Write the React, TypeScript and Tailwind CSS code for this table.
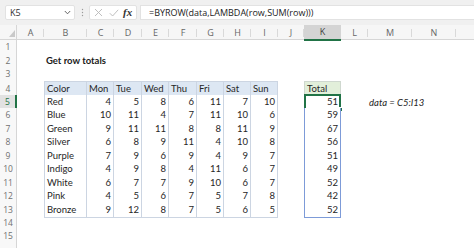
import React from "react";

const GRID =
  "grid grid-cols-[17px_27px_43px_27px_28px_27px_28px_27px_27px_27px_26px_37px_27px_44px_44px_1fr]";

const LETTERS = ["A", "B", "C", "D", "E", "F", "G", "H", "I", "J", "K", "L", "M", "N", ""];

const DAYS = ["Mon", "Tue", "Wed", "Thu", "Fri", "Sat", "Sun"];

const DATA: [string, number[]][] = [
  ["Red", [4, 5, 8, 6, 11, 7, 10]],
  ["Blue", [10, 11, 4, 7, 11, 10, 6]],
  ["Green", [9, 11, 11, 8, 8, 11, 9]],
  ["Silver", [6, 8, 9, 11, 4, 10, 8]],
  ["Purple", [7, 9, 6, 9, 4, 9, 7]],
  ["Indigo", [4, 9, 8, 4, 11, 6, 7]],
  ["White", [6, 7, 7, 9, 10, 6, 7]],
  ["Pink", [4, 5, 6, 7, 5, 7, 8]],
  ["Bronze", [9, 12, 8, 7, 5, 6, 5]],
];

// alternating row heights so borders land on whole pixels
const ROW_H: Record<number, string> = {
  1: "h-[14px]", 2: "h-[13px]", 3: "h-[14px]",
  4: "h-[14px]", 5: "h-[13px]", 6: "h-[14px]", 7: "h-[13px]", 8: "h-[14px]",
  9: "h-[13px]", 10: "h-[14px]", 11: "h-[13px]", 12: "h-[14px]", 13: "h-[13px]",
  14: "h-[14px]", 15: "h-[13px]", 16: "h-[14px]",
};

const ui = { fontFamily: '"Open Sans", "Liberation Sans", sans-serif' };
const cell = { fontFamily: 'Lato, "Open Sans", sans-serif' };

function Toolbar() {
  return (
    <div className="h-[25px] bg-[#f0f0f0] flex items-center pl-[5px] text-[#333]" style={ui}>
      <div className="w-[70px] h-[15px] bg-white border border-[#e2e2e2] rounded-[2px] flex items-center justify-between pl-[4px] pr-[3px] text-[9px]">
        <span>K5</span>
        <svg width="7" height="5" viewBox="0 0 7 5">
          <path d="M0.8 1 L3.5 3.8 L6.2 1" fill="none" stroke="#555" strokeWidth="0.9" />
        </svg>
      </div>
      <div className="w-[14px] flex justify-center">
        <svg width="3" height="9" viewBox="0 0 3 9">
          <circle cx="1.5" cy="1.5" r="0.7" fill="#9a9a9a" />
          <circle cx="1.5" cy="4.5" r="0.7" fill="#9a9a9a" />
          <circle cx="1.5" cy="7.5" r="0.7" fill="#9a9a9a" />
        </svg>
      </div>
      <div className="w-[48px] h-[15px] bg-white border border-[#e2e2e2] rounded-[2px] flex items-center">
        <svg className="ml-[4px]" width="9" height="9" viewBox="0 0 9 9">
          <path d="M1 1 L8 8 M8 1 L1 8" stroke="#b8b8b8" strokeWidth="0.9" />
        </svg>
        <svg className="ml-[6px]" width="10" height="8" viewBox="0 0 10 8">
          <path d="M0.8 4.2 L3.6 7 L9.2 0.8" fill="none" stroke="#b8b8b8" strokeWidth="0.9" />
        </svg>
        <span
          className="ml-[4px] italic font-bold text-[11px] leading-none text-[#333]"
          style={{ fontFamily: '"Liberation Serif", serif' }}
        >
          fx
        </span>
      </div>
      <div className="ml-[3px] flex-1 h-[15px] bg-white border-y border-l border-[#e2e2e2] flex items-center pl-[8px] text-[9px] text-[#222] whitespace-nowrap">
        =BYROW(data,LAMBDA(row,SUM(row)))
      </div>
    </div>
  );
}

function ColumnHeader() {
  return (
    <div className={`${GRID} h-[15px] bg-[#f6f6f6] border-b border-[#d6d6d6]`} style={ui}>
      <div className="relative border-r border-[#d6d6d6]">
        <svg className="absolute left-[9px] top-[5px]" width="6" height="7" viewBox="0 0 6 7">
          <path d="M6 0 L6 7 L0 7 Z" fill="#c9c9c9" />
        </svg>
      </div>
      {LETTERS.map((l, i) =>
        l === "K" ? (
          <div
            key={i}
            className="flex items-center justify-center text-[9px] text-[#3f3f3f] bg-[#d4d4d4] border-b-2 border-[#217346] relative"
          >
            {l}
          </div>
        ) : (
          <div key={i} className="relative flex items-center justify-center text-[9px] text-[#666]">
            {l}
            {l && <span className="absolute right-0 top-[4px] h-[8px] w-px bg-[#d9d9d9]" />}
          </div>
        )
      )}
    </div>
  );
}

function Cell({ r, c }: { r: number; c: number }) {
  // table B4:I13
  if (r >= 4 && r <= 13 && c >= 2 && c <= 9) {
    const head = r === 4;
    const rec = DATA[r - 5];
    const text = head ? (c === 2 ? "Color" : DAYS[c - 3]) : c === 2 ? rec[0] : String(rec[1][c - 3]);
    const left = head || c === 2;
    return (
      <div
        className={`border-r border-b border-[#ccd5e2] flex items-center text-[9.5px] text-[#262626] ${
          head ? "bg-[#dde7f3] border-t" : "bg-white"
        } ${c === 2 ? "border-l" : ""} ${left ? "pl-[2px]" : "justify-end pr-[2px]"}`}
        style={cell}
      >
        {text}
      </div>
    );
  }
  // Total column K4:K13
  if (c === 11 && r >= 4 && r <= 13) {
    if (r === 4) {
      return (
        <div
          className="bg-[#e2efda] border border-[#cfd8cf] flex items-center pl-[2px] text-[9.5px] text-[#262626]"
          style={cell}
        >
          Total
        </div>
      );
    }
    const total = DATA[r - 5][1].reduce((a, b) => a + b, 0);
    return (
      <div
        className={`relative bg-white border-x border-[#7d9bd8] border-b flex items-center justify-end pr-[2px] text-[9.5px] text-[#262626] ${
          r === 13 ? "border-b-[#7d9bd8]" : "border-b-[#d5dbe6]"
        }`}
        style={cell}
      >
        {total}
        {r === 5 && (
          <>
            <span className="absolute -left-[1px] -right-[1px] -top-[1px] -bottom-[1px] border-2 border-[#217346]" />
            <span className="absolute -right-[3px] -bottom-[3px] w-[5px] h-[5px] bg-[#217346] border border-white" />
          </>
        )}
      </div>
    );
  }
  if (r === 2 && c === 2) {
    return (
      <div className="flex items-center pl-[2px] whitespace-nowrap font-bold text-[9.5px] text-[#1a1a1a]" style={cell}>
        Get row totals
      </div>
    );
  }
  if (r === 5 && c === 13) {
    return (
      <div className="flex items-center pl-[1px] whitespace-nowrap italic text-[9.5px] text-[#262626]" style={cell}>
        data = C5:I13
      </div>
    );
  }
  return <div />;
}

function SheetRow({ r }: { r: number }) {
  const active = r === 5;
  return (
    <div className={`${GRID} ${ROW_H[r]}`}>
      <div
        className={`flex items-center justify-center text-[8.5px] border-r ${
          active
            ? "bg-[#e2e2e2] text-[#217346] border-r-2 border-[#217346]"
            : "bg-[#f8f8f8] text-[#707070] border-[#d6d6d6]"
        }`}
        style={ui}
      >
        {r < 16 ? r : ""}
      </div>
      {Array.from({ length: 15 }, (_, i) => (
        <Cell key={i} r={r} c={i + 1} />
      ))}
    </div>
  );
}

export default function App() {
  return (
    <div className="w-[474px] h-[248px] overflow-hidden bg-white">
      <Toolbar />
      <ColumnHeader />
      {Array.from({ length: 16 }, (_, i) => (
        <SheetRow key={i} r={i + 1} />
      ))}
    </div>
  );
}
